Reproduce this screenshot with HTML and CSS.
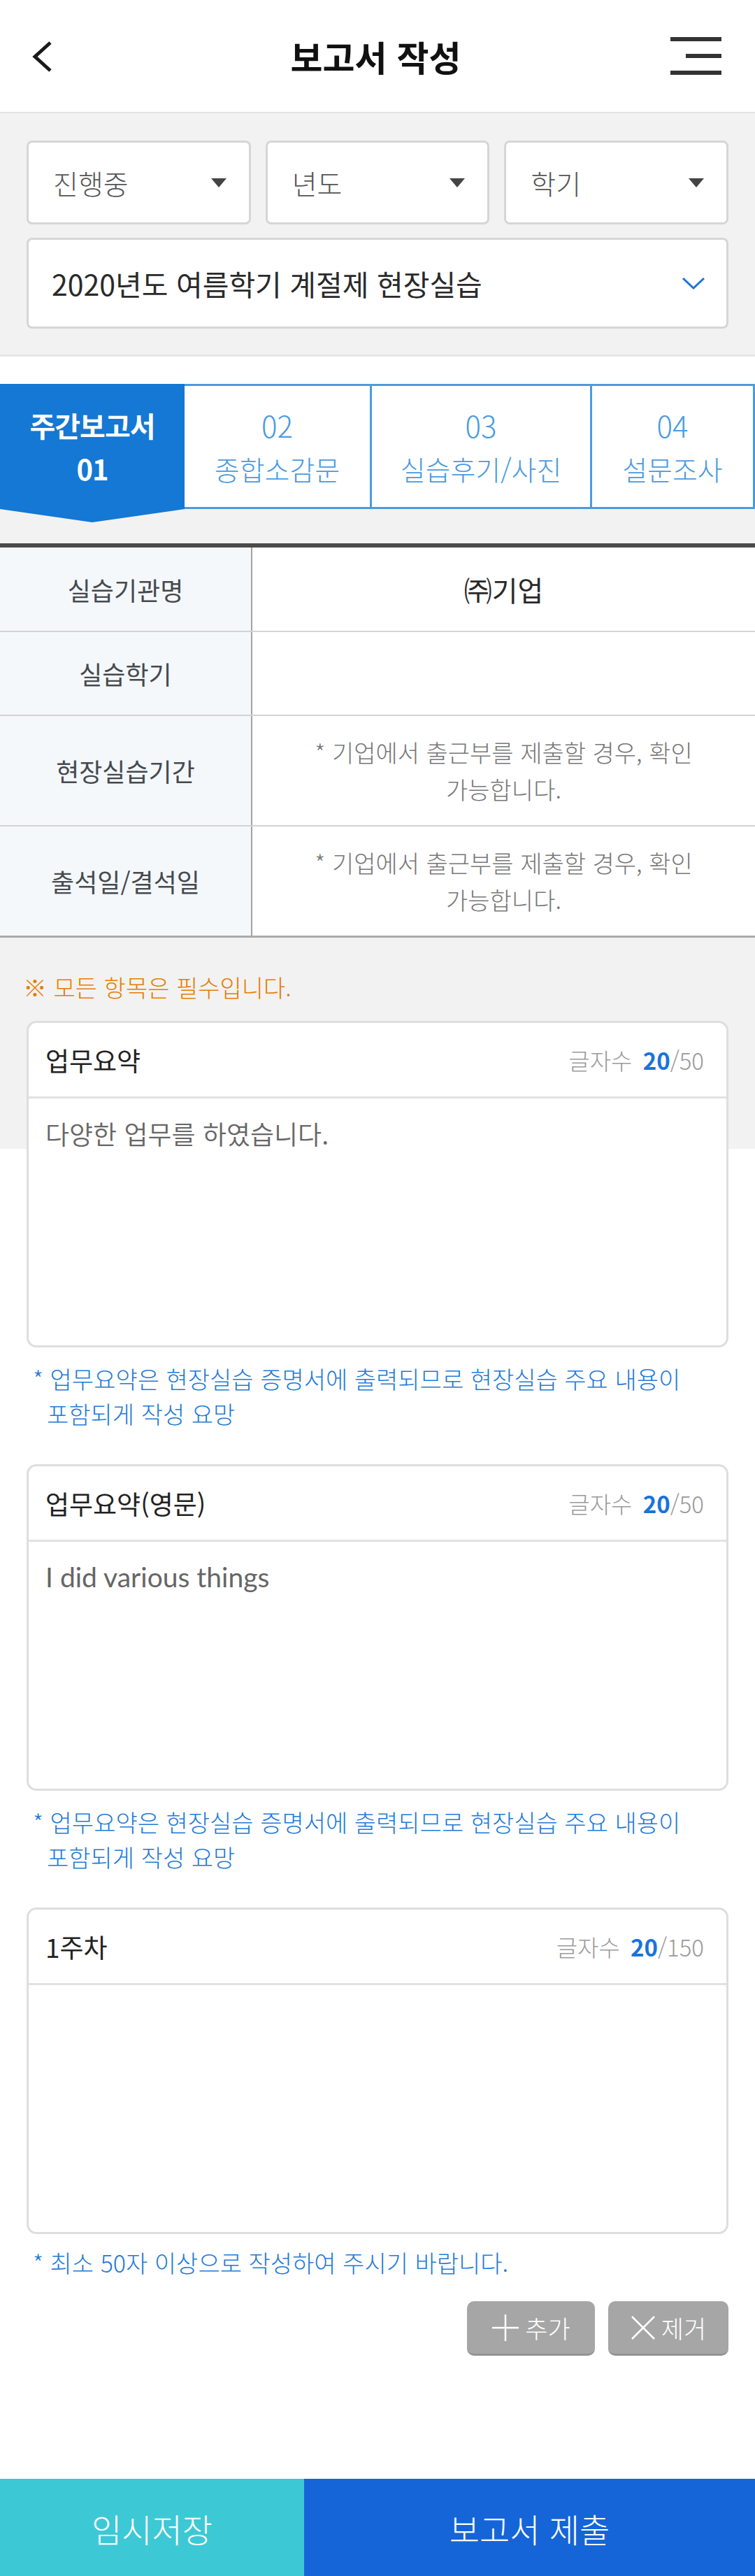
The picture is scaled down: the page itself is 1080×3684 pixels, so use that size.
FILE: index.html
```html
<!DOCTYPE html>
<html lang="ko">
<head>
<meta charset="utf-8">
<title>보고서 작성</title>
<link rel="stylesheet" href="styles.css">
</head>
<body>
<div class="page">
  <header class="topbar">
    <svg class="back" width="32" height="46" viewBox="0 0 32 46"><path d="M28 3 L6 23 L28 43" fill="none" stroke="#1a1a1a" stroke-width="5"/></svg>
    <h1 class="title">보고서 작성</h1>
    <div class="burger"><span class="bl"></span><span class="bl short"></span><span class="bl"></span></div>
  </header>

  <section class="filters">
    <div class="sel-row">
      <div class="sel"><span>진행중</span><i class="caret"></i></div>
      <div class="sel"><span>년도</span><i class="caret"></i></div>
      <div class="sel"><span>학기</span><i class="caret"></i></div>
    </div>
    <div class="sel sel-big"><span>2020년도 여름학기 계절제 현장실습</span>
      <svg class="chev" width="34" height="18" viewBox="0 0 34 18"><path d="M2 2 L17 16 L32 2" fill="none" stroke="#1a73d9" stroke-width="3"/></svg>
    </div>
  </section>

  <nav class="tabs">
    <div class="tab active"><b>주간보고서</b><b>01</b></div>
    <div class="tab t2"><span class="num">02</span><span>종합소감문</span></div>
    <div class="tab t3"><span class="num">03</span><span>실습후기/사진</span></div>
    <div class="tab t4"><span class="num">04</span><span>설문조사</span></div>
  </nav>
  <div class="tab-gap"></div>

  <div class="info">
    <div class="row r1"><div class="lab">실습기관명</div><div class="val strong">㈜기업</div></div>
    <div class="row r1"><div class="lab">실습학기</div><div class="val"></div></div>
    <div class="row r2"><div class="lab">현장실습기간</div><div class="val note">* 기업에서 출근부를 제출할 경우, 확인<br>가능합니다.</div></div>
    <div class="row r2 last"><div class="lab">출석일/결석일</div><div class="val note">* 기업에서 출근부를 제출할 경우, 확인<br>가능합니다.</div></div>
  </div>

  <section class="form">
    <p class="required">※ 모든 항목은 필수입니다.</p>

    <div class="card">
      <div class="card-head"><span class="card-title">업무요약</span><span class="count">글자수 <b>20</b>/50</span></div>
      <div class="card-body">다양한 업무를 하였습니다.</div>
    </div>
    <p class="hint">* 업무요약은 현장실습 증명서에 출력되므로 현장실습 주요 내용이 포함되게 작성 요망</p>

    <div class="card">
      <div class="card-head"><span class="card-title">업무요약(영문)</span><span class="count">글자수 <b>20</b>/50</span></div>
      <div class="card-body en">I did various things</div>
    </div>
    <p class="hint">* 업무요약은 현장실습 증명서에 출력되므로 현장실습 주요 내용이 포함되게 작성 요망</p>

    <div class="card">
      <div class="card-head"><span class="card-title">1주차</span><span class="count">글자수 <b>20</b>/150</span></div>
      <div class="card-body"></div>
    </div>
    <p class="hint h3">* 최소 50자 이상으로 작성하여 주시기 바랍니다.</p>

    <div class="actions">
      <button class="btn add"><svg width="40" height="40" viewBox="0 0 40 40"><path d="M20 1 V39 M1 20 H39" stroke="#fff" stroke-width="2.5" fill="none"/></svg>추가</button>
      <button class="btn del"><svg width="36" height="34" viewBox="0 0 36 34"><path d="M2 1 L34 33 M34 1 L2 33" stroke="#fff" stroke-width="2.5" fill="none"/></svg>제거</button>
    </div>
  </section>

  <footer class="bottom">
    <button class="save">임시저장</button>
    <button class="submit">보고서 제출</button>
  </footer>
</div>
</body>
</html>
```

FILE: styles.css
```css
* { box-sizing: border-box; }
html, body { margin: 0; padding: 0; }
body {
  font-family: "Noto Sans CJK KR", "Noto Sans", sans-serif;
  font-weight: 300;
  background: #fff;
  color: #333;
  word-break: keep-all;
}
.page { width: 1080px; }

.topbar {
  height: 162px;
  border-bottom: 2px solid #e3e3e3;
  display: flex;
  align-items: center;
  justify-content: space-between;
  padding: 0 48px 0 44px;
}
.back { display: block; margin-top: 2px; }
.title {
  margin: 0;
  font-size: 50px;
  font-weight: 700;
  color: #111;
  letter-spacing: 0;
  margin-left: 40px;
}
.burger { width: 73px; display: flex; flex-direction: column; align-items: flex-end; gap: 18px; }
.bl { display: block; width: 73px; height: 6px; background: #333; }
.bl.short { width: 51px; }

.filters {
  background: #f2f2f2;
  padding: 39px 38px 37px;
  border-bottom: 3px solid #e6e6e6;
}
.sel-row { display: grid; grid-template-columns: repeat(3, 1fr); gap: 21px; }
.sel {
  height: 120px;
  background: #fff;
  border: 3px solid #d6d6d6;
  border-radius: 8px;
  display: flex;
  align-items: center;
  justify-content: space-between;
  padding: 0 32px 0 35px;
  font-size: 39px;
  color: #555;
}
.caret {
  width: 0; height: 0;
  border-left: 11px solid transparent;
  border-right: 11px solid transparent;
  border-top: 13px solid #444;
}
.sel-big {
  margin-top: 19px;
  height: 130px;
  font-size: 41px;
  font-weight: 400;
  color: #2a2a2a;
  padding: 0 30px 0 33px;
}

.tabs {
  margin-top: 39px;
  display: flex;
  height: 179px;
}
.tab {
  display: flex;
  flex-direction: column;
  align-items: center;
  justify-content: center;
  gap: 4px;
  font-size: 39px;
  color: #4a9be0;
  border-top: 3px solid #4a9be0;
  border-bottom: 3px solid #4a9be0;
  border-right: 3px solid #4a9be0;
  line-height: 58px;
}
.tab .num { font-size: 42px; }
.tab.active {
  width: 264px;
  background: #1478d4;
  color: #fff;
  border: none;
  position: relative;
  font-size: 40px;
  letter-spacing: -1px;
}
.tab.active b { font-weight: 700; }
.tab.active::after {
  content: "";
  position: absolute;
  left: 0; top: 100%;
  width: 100%; height: 19px;
  background: #1478d4;
  clip-path: polygon(0 0, 100% 0, 50% 100%);
}
.t2 { width: 268px; }
.t3 { width: 315px; }
.t4 { width: 233px; }
.tab-gap { height: 49px; background: #f2f2f2; }

.info { border-top: 6px solid #4b4b4b; border-bottom: 3px solid #aaa; }
.row { display: grid; grid-template-columns: 361px 1fr; border-top: 2px solid #d3d3d3; }
.row:first-child { border-top: none; }
.r1 { min-height: 120px; }
.row:first-child.r1 { min-height: 119px; }
.r2 { min-height: 158px; }
.lab {
  background: #f4f8fb;
  border-right: 2px solid #a3a3a3;
  display: flex; align-items: center; justify-content: center;
  font-size: 36px; font-weight: 400; color: #464a4f;
}
.val {
  display: flex; align-items: center; justify-content: center;
  text-align: center;
}
.val.strong { font-size: 40px; font-weight: 400; color: #2a2a2a; }
.val.note { font-size: 34px; color: #777; line-height: 53px; }

.form {
  padding: 0 38px 0;
  background: linear-gradient(#f2f2f2 0, #f2f2f2 302px, #fff 302px);
}
.required {
  margin: 0 0 0 -5px;
  padding-top: 46px;
  font-size: 34px;
  line-height: 50px;
  color: #e67e00;
}
.card {
  margin-top: 23px;
  background: #fff;
  border: 3px solid #dedede;
  border-radius: 14px;
  overflow: hidden;
}
.card + .hint { margin-top: 20px; }
.hint + .card { margin-top: 47px; }
.card-head {
  height: 108px;
  border-bottom: 3px solid #e2e2e2;
  display: flex; align-items: center; justify-content: space-between;
  padding: 0 32px 0 24px;
}
.card-title { font-size: 37px; font-weight: 400; color: #222; }
.count { font-size: 33px; color: #9a9a9a; }
.count b { color: #1a73d9; font-weight: 700; margin-left: 6px; }
.card-body {
  height: 353px;
  padding: 24px 24px;
  font-size: 37px;
  font-weight: 350;
  line-height: 52px;
  color: #666;
}
.card-body.en { font-family: "Lato", "Noto Sans CJK KR", sans-serif; font-size: 39px; font-weight: 400; }
.hint {
  margin: 0;
  padding-left: 29px;
  text-indent: -20px;
  font-size: 34px;
  line-height: 50px;
  color: #1e7ad8;
}
.hint.h3 { margin-top: 16px; }

.actions {
  margin-top: 30px;
  display: flex; justify-content: flex-end; gap: 19px;
}
.btn {
  height: 78px;
  border: none;
  border-bottom: 3px solid #949494;
  border-radius: 10px;
  background: #a6a6a6;
  color: #fff;
  font-family: inherit;
  font-weight: 300;
  font-size: 35px;
  display: flex; align-items: center; justify-content: center; gap: 8px;
  padding: 0;
}
.btn.add { width: 183px; }
.btn.del { width: 172px; }

.bottom {
  margin-top: 176px;
  display: flex;
  height: 141px;
}
.bottom button {
  border: none;
  color: #fff;
  font-family: inherit;
  font-weight: 300;
  font-size: 47px;
}
.save { width: 435px; background: #3dc8d5; }
.submit { flex: 1; background: #1565d8; }
```
